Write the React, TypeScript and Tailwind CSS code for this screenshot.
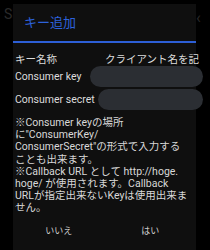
import React from 'react'

const FONT = '[font-family:Roboto,"Noto_Sans_CJK_JP",sans-serif]'

const notes = [
    '※Consumer keyの場所',
    'に"ConsumerKey/',
    'ConsumerSecret"の形式で入力する',
    'ことも出来ます。',
    '※Callback URL として http://hoge.',
    'hoge/ が使用されます。Callback',
    'URLが指定出来ないKeyは使用出来ま',
    'せん。',
]

export default function App() {
    return (
        <div className={`relative w-[210px] h-[250px] bg-black overflow-hidden ${FONT}`}>
            {/* 背後の画面 */}
            <span className="absolute left-[4px] top-[4px] text-[14px] text-[#2a2a2a]">Sl</span>
            <span className="absolute left-[196px] top-[6px] text-[16px] text-[#2a2a2a]">‹</span>

            {/* ダイアログ */}
            <div className="relative ml-[13px] mt-[4px] w-[183px] h-[246px] bg-[#0f0f0f] flex flex-col">
                <div className="h-[37px] flex items-center pl-[11px] text-[13px] text-[#2d62dc]">
                    キー追加
                </div>
                <div className="h-[2px] bg-[#2d5fd6]" />

                <div className="flex items-center h-[14px] mt-[10px] text-[10.5px] text-[#dcdcdc]">
                    <span className="w-[92px] pl-[2px] shrink-0">キー名称</span>
                    <span className="whitespace-nowrap">クライアント名を記</span>
                </div>

                <div className="flex items-center h-[21px] mt-[-1px] mr-[-7px] text-[10.5px] text-[#dcdcdc] pl-[2px]">
                    <span className="w-[75px] shrink-0 whitespace-nowrap">Consumer key</span>
                    <div className="h-[21px] flex-1 rounded-full bg-[#2b2e33]" />
                </div>
                <div className="flex items-center h-[21px] mt-[2px] mr-[-7px] text-[10.5px] text-[#dcdcdc] pl-[2px]">
                    <span className="shrink-0 pr-[3px] whitespace-nowrap">Consumer secret</span>
                    <div className="h-[21px] flex-1 rounded-full bg-[#2b2e33]" />
                </div>

                <div className="mt-[7px] pl-[2px] text-[10.5px] leading-[12.2px] text-[#d8d8d8] whitespace-nowrap">
                    {notes.map((line, i) => (
                        <div key={i}>{line}</div>
                    ))}
                </div>

                <div className="flex mt-[10px] text-[9px] leading-[13px] text-[#cfcfcf]">
                    <div className="flex-1 text-center">いいえ</div>
                    <div className="flex-1 text-center">はい</div>
                </div>
            </div>
        </div>
    )
}
